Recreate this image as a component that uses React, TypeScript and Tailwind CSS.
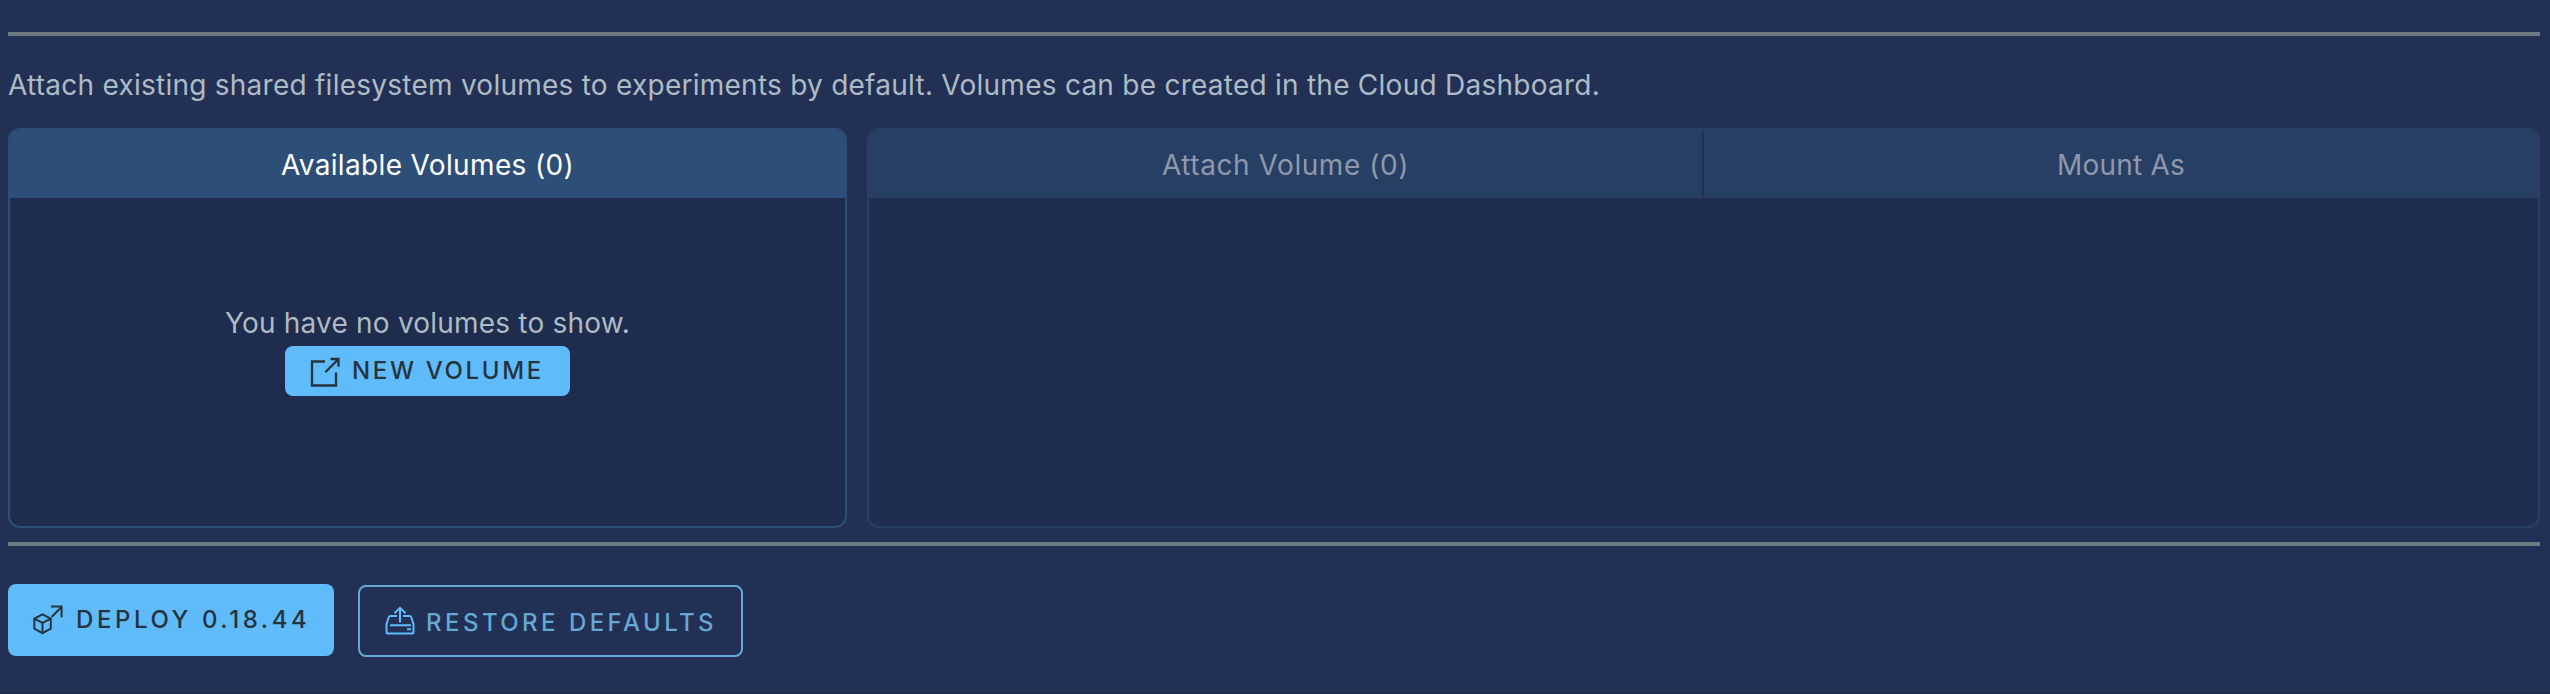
import type { ReactNode } from "react";

function DeployIcon() {
  return (
    <svg className="h-[30px] w-[30px] shrink-0" viewBox="0 0 30 30" fill="none" stroke="currentColor" strokeWidth="2">
      <path d="M9.5 9.3 17.8 13.6v10L9.5 28.2 1.3 23.6v-10Z" strokeLinejoin="round" />
      <path d="M1.3 13.6l8.2 4.2 8.3-4.2M9.5 17.8v10.2M18.6 12 28.2 2.2M18 1.5h10.6v10.8" />
    </svg>
  );
}

function RestoreIcon() {
  return (
    <svg className="h-[30px] w-[30px] shrink-0" viewBox="0 0 30 30" fill="none" stroke="currentColor" strokeWidth="2">
      <path d="M12 10H5.2Q4.2 10 3.9 11L1.5 17.8V26.3Q1.5 27.5 2.7 27.5H27.3Q28.5 27.5 28.5 26.3V17.8L26.1 11Q25.8 10 24.8 10H18" />
      <path d="M5 19.3h21M22 23.2h4M15 16.5V2.5M9.5 7.3 15 1.8l5.5 5.5" />
    </svg>
  );
}

function ExternalIcon() {
  return (
    <svg className="h-[30px] w-[30px] shrink-0" viewBox="0 0 30 30" fill="none" stroke="currentColor" strokeWidth="2.3">
      <path d="M15 4.5H2v24h24V15.5M15.3 15.2 28 2.5M20.5 2H28.5v7.8" />
    </svg>
  );
}

function HeaderCell({ children }: { children: ReactNode }) {
  return <div className="flex flex-1 items-center justify-center pt-px">{children}</div>;
}

export default function App() {
  return (
    <main className="h-[694px] border-b border-[#1d294a] bg-[#223055] pt-8 pr-[10px] pl-2 font-['Inter',sans-serif] text-[28px] leading-9 text-[#adbbc4]">
      <hr className="h-1 border-0 bg-[#6d7b80]" />
      <p className="mt-[31px] h-9 w-max tracking-[0.25px]">
        Attach existing shared filesystem volumes to experiments by default. Volumes can be created in the Cloud Dashboard.
      </p>
      <div className="mt-[25px] flex h-[400px] gap-5">
        <section className="flex w-[839px] flex-col overflow-hidden rounded-xl border-2 border-[#2d4f77] bg-[#1e2c4e]">
          <header className="flex h-[68px] bg-[#2d4f77] tracking-[0.35px] text-white">
            <HeaderCell>Available Volumes (0)</HeaderCell>
          </header>
          <div className="flex flex-1 flex-col items-center pt-[107px]">
            <p className="h-9 tracking-[0.2px]">You have no volumes to show.</p>
            <button className="mt-[5px] flex h-[50px] w-[285px] items-center gap-[12px] rounded-lg bg-[#60bbfb] pl-[25px] text-2xl font-medium tracking-[2.65px] whitespace-nowrap text-[#25333d]">
              <span className="pt-[2px]"><ExternalIcon /></span>
              <span>NEW VOLUME</span>
            </button>
          </div>
        </section>
        <section className="flex flex-1 flex-col overflow-hidden rounded-xl border-2 border-[#273f65] bg-[#1f2e50]">
          <header className="flex h-[68px] bg-[#273f65] text-[#8f98ab]">
            <div className="flex w-[833px] items-center justify-center pt-px tracking-[0.57px]">Attach Volume (0)</div>
            <div className="w-[2px] rounded-t-xs bg-[#203056]" />
            <HeaderCell><span className="tracking-[0.2px]">Mount As</span></HeaderCell>
          </header>
        </section>
      </div>
      <hr className="mt-[14px] h-1 border-0 bg-[#6d7b80]" />
      <div className="mt-[38px] flex gap-6 text-2xl font-medium whitespace-nowrap">
        <button className="flex h-[72px] w-[326px] items-center gap-[13px] rounded-lg bg-[#60bbfb] pl-[25px] tracking-[3.6px] text-[#25333d]">
          <DeployIcon />
          <span>DEPLOY 0.18.44</span>
        </button>
        <button className="mt-px flex h-[72px] w-[385px] items-center gap-[11px] rounded-lg border-2 border-[#64a8d3] pl-[25px] tracking-[3.45px] text-[#64a8d3]">
          <span className="text-[#60bbfb]"><RestoreIcon /></span>
          <span className="pt-[3px]">RESTORE DEFAULTS</span>
        </button>
      </div>
    </main>
  );
}
